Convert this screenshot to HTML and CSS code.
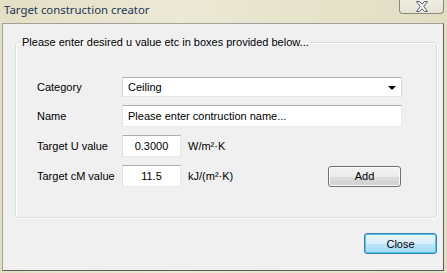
FILE: index.html
```html
<html>

<head>
    <title>Target construction creator</title>
    <link rel="stylesheet" href="styles.css">
</head>

<body>
    <div class="window">
        <div class="titlebar">
            <span class="title">Target construction creator</span>
            <div class="close-x">
                <svg width="14" height="11" viewBox="0 0 14 11">
                    <path d="M1.5 0.5 L4.5 0.5 L7 3.2 L9.5 0.5 L12.5 0.5 L8.8 5.5 L12.5 10.5 L9.5 10.5 L7 7.8 L4.5 10.5 L1.5 10.5 L5.2 5.5 Z"
                        fill="#f4f4f4" stroke="#5d6170" stroke-width="1" stroke-linejoin="round" />
                </svg>
            </div>
        </div>

        <div class="client">
            <fieldset class="group">
                <legend>Please enter desired u value etc in boxes provided below...</legend>

                <div class="row">
                    <span class="lbl">Category</span>
                    <div class="combo">
                        <span>Ceiling</span>
                        <span class="arrow"></span>
                    </div>
                </div>

                <div class="row">
                    <span class="lbl">Name</span>
                    <div class="textbox wide">Please enter contruction name...</div>
                </div>

                <div class="row">
                    <span class="lbl">Target U value</span>
                    <div class="textbox small">0.3000</div>
                    <span class="unit">W/m²·K</span>
                </div>

                <div class="row">
                    <span class="lbl">Target cM value</span>
                    <div class="textbox small">11.5</div>
                    <span class="unit">kJ/(m²·K)</span>
                    <button class="btn add">Add</button>
                </div>
            </fieldset>

            <div class="footer">
                <button class="btn btn-default">Close</button>
            </div>
        </div>
    </div>
</body>

</html>
```

FILE: styles.css
```css
body {
    margin: 0;
    padding: 0;
    font-family: "Liberation Sans", Arial, sans-serif;
    font-size: 11px;
    color: #000;
}

.window {
    width: 447px;
    height: 273px;
    box-sizing: border-box;
    background: linear-gradient(to right, #e3dfc6, #ece9d6 40%, #e6e3cb 70%, #e2dec4);
    overflow: hidden;
}

/* заголовок окна */
.titlebar {
    height: 23px;
    display: flex;
    align-items: flex-start;
    justify-content: space-between;
}

.title {
    font-family: "Noto Sans", "Open Sans", sans-serif;
    font-size: 11.4px;
    color: #1b3553;
    margin-left: 4px;
    margin-top: 2px;
}

.close-x {
    width: 45px;
    height: 15px;
    margin-right: 3px;
    margin-top: -1px;
    box-sizing: border-box;
    border: 1px solid #8b8a7e;
    border-top: none;
    border-radius: 0 0 4px 4px;
    background: linear-gradient(#f1efe4, #e6e3d2);
    display: flex;
    align-items: center;
    justify-content: center;
}

.client {
    margin-left: 2px;
    width: 442px;
    height: 248px;
    box-sizing: border-box;
    background-color: #f0f0f0;
    border: 1px solid #a2a197;
    border-right-color: #5c5c5c;
    border-bottom-color: #5c5c5c;
    padding: 12px 6px 0 12px;
}

/* рамка группы */
.group {
    margin: 0;
    border: 1px solid #d5dfe5;
    border-radius: 3px;
    box-shadow: inset 1px 1px 0 #fff, 1px 1px 0 #fff;
    padding: 28px 34px 30px 21px;
    display: flex;
    flex-direction: column;
    gap: 8px;
}

.group legend {
    padding: 0 2px;
    margin-left: -17px;
    line-height: 13px;
}

.row {
    display: flex;
    align-items: center;
}

.lbl {
    width: 85px;
    flex-shrink: 0;
}

.combo,
.textbox {
    box-sizing: border-box;
    background-color: #fff;
    border: 1px solid #e3e9ef;
    border-top-color: #abadb3;
    border-left-color: #e2e3ea;
    display: flex;
    align-items: center;
}

.combo {
    width: 280px;
    height: 20px;
    padding-left: 5px;
    justify-content: space-between;
    border-color: #b0b0b0 #d9d9d9 #e5e5e5 #d9d9d9;
}

.arrow {
    width: 0;
    height: 0;
    border-left: 4px solid transparent;
    border-right: 4px solid transparent;
    border-top: 4px solid #000;
    margin-right: 5px;
    margin-top: 1px;
}

.textbox.wide {
    width: 280px;
    height: 22px;
    padding-left: 5px;
}

.textbox.small {
    width: 59px;
    height: 22px;
    justify-content: center;
}

.unit {
    margin-left: 7px;
}

.btn {
    font-family: "Liberation Sans", Arial, sans-serif;
    font-size: 11px;
    color: #000;
    width: 73px;
    height: 21px;
    padding: 0;
    border: 1px solid #707070;
    border-radius: 3px;
    background: linear-gradient(#f2f2f2, #ebebeb 50%, #dddddd 51%, #cfcfcf);
    box-shadow: inset 0 0 0 1px #fcfcfc;
}

.add {
    margin-left: auto;
    margin-right: 1px;
}

.footer {
    display: flex;
    justify-content: flex-end;
    margin-top: 15px;
}

.btn-default {
    border-color: #3c7fb1;
    background: linear-gradient(#eaf6fd, #d9f0fc 50%, #bee6fd 51%, #a7d9f5);
    box-shadow: inset 0 0 0 1px #48c7f5;
}
```
